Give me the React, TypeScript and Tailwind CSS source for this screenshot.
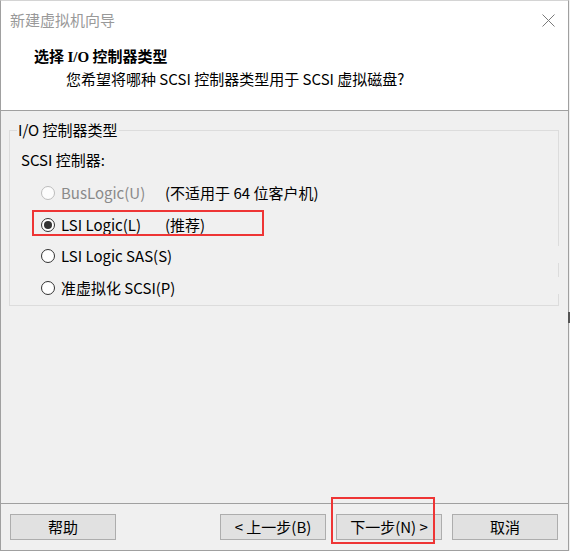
import React from "react";

const FONT = { fontFamily: '"Noto Sans CJK SC", "Noto Sans", sans-serif' };

function Radio({ checked, disabled }: { checked?: boolean; disabled?: boolean }) {
  return (
    <span
      className={
        "flex h-[14px] w-[14px] shrink-0 items-center justify-center rounded-full border " +
        (disabled ? "border-[#bcbcbc] bg-[#fcfcfc]" : "border-[#333333] bg-white")
      }
    >
      {checked && <span className="h-[8px] w-[8px] rounded-full bg-[#333333]" />}
    </span>
  );
}

function Option({
  label,
  note,
  checked,
  disabled,
}: {
  label: string;
  note?: string;
  checked?: boolean;
  disabled?: boolean;
}) {
  return (
    <div className="flex h-[20px] items-center">
      <Radio checked={checked} disabled={disabled} />
      <span
        className={
          "ml-[6px] min-w-[104px] whitespace-nowrap leading-[20px] " +
          (disabled ? "text-[#8a8a8a]" : "text-black")
        }
      >
        {label}
      </span>
      {note && <span className="whitespace-nowrap leading-[20px] text-black">{note}</span>}
    </div>
  );
}

function Btn({ children }: { children: React.ReactNode }) {
  return (
    <div className="flex h-[26px] w-[106px] items-center justify-center border border-[#adadad] bg-[#e1e1e1] text-[15px] leading-[20px] text-black whitespace-nowrap">
      {children}
    </div>
  );
}

export default function App() {
  return (
    <div className="relative h-[551px] w-[570px] bg-[#f0f0f0] text-[15px]" style={FONT}>
      <div className="relative flex h-[551px] w-[569px] flex-col border border-[#a0a0a0] border-t-[#d4d4d4] bg-[#f0f0f0]">
        {/* header */}
        <div className="flex h-[110px] flex-col border-b border-[#a0a0a0] bg-white">
          <div className="flex h-[38px] items-center justify-between pl-[9px] pr-[13px]">
            <span className="leading-[20px] text-[#999999]">新建虚拟机向导</span>
            <svg width="13" height="13" viewBox="0 0 13 13">
              <path d="M0.5 0.5 L12.5 12.5 M12.5 0.5 L0.5 12.5" stroke="#7a7a7a" strokeWidth="1" fill="none" />
            </svg>
          </div>
          <div className="mt-[7px] pl-[33px] font-bold leading-[20px] text-black">
            选择 <span style={{ fontFamily: '"Liberation Serif", serif' }}>I/O</span> 控制器类型
          </div>
          <div className="mt-[2px] pl-[65px] leading-[20px] text-black">
            您希望将哪种 SCSI 控制器类型用于 SCSI 虚拟磁盘?
          </div>
        </div>

        {/* body */}
        <div className="flex flex-1 flex-col">
          <div className="relative ml-[8px] mt-[19px] h-[176px] w-[550px] border border-[#dcdcdc]">
            <span className="absolute left-[7px] top-[-11px] bg-[#f0f0f0] px-[1px] leading-[20px] text-black">
              I/O 控制器类型
            </span>
            <div className="pl-[11px] pt-[19px] leading-[20px] text-black">SCSI 控制器:</div>
            <div className="mt-[13px] flex flex-col gap-[11.7px] pl-[31px]">
              <Option label="BusLogic(U)" note="(不适用于 64 位客户机)" disabled />
              <Option label="LSI Logic(L)" note="(推荐)" checked />
              <Option label="LSI Logic SAS(S)" />
              <Option label="准虚拟化 SCSI(P)" />
            </div>
          </div>
        </div>

        {/* footer */}
        <div className="flex h-[47px] items-start border-t border-[#a0a0a0] pl-[9px] pr-[10px] pt-[10px]">
          <Btn>帮助</Btn>
          <div className="ml-auto flex gap-[10px]">
            <Btn>&lt; 上一步(B)</Btn>
            <Btn>下一步(N) &gt;</Btn>
            <Btn>取消</Btn>
          </div>
        </div>

        {/* overlays: group box edge gaps */}
        <div className="absolute left-[557px] top-[245px] h-[17px] w-[1px] bg-[#f0f0f0]" />
        <div className="absolute left-[557px] top-[276px] h-[17px] w-[1px] bg-[#f0f0f0]" />

        {/* red annotation boxes */}
        <div className="pointer-events-none absolute left-[31px] top-[209px] h-[26px] w-[232px] border-2 border-[#ee3535]" />
        <div className="pointer-events-none absolute left-[330px] top-[496px] h-[47px] w-[104px] border-2 border-[#ee3535]" />
      </div>
      <div className="absolute left-[568px] top-[312px] h-[11px] w-[2px] bg-[#555555]" />
    </div>
  );
}
